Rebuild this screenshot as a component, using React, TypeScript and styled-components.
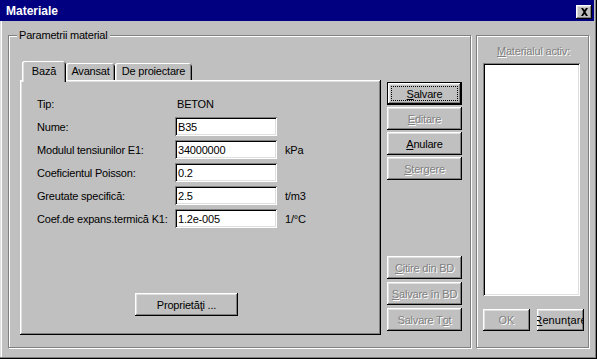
import React from "react";
import styled, { createGlobalStyle, css } from "styled-components";

const GlobalStyle = createGlobalStyle`
  html, body {
    margin: 0;
    padding: 0;
    background: #c0c0c0;
  }
  body {
    font-family: "Liberation Sans", Arial, sans-serif;
    font-size: 11px;
    letter-spacing: -0.2px;
    color: #000;
  }
`;

const raised = css`
  box-shadow: inset -1px -1px #000, inset 1px 1px #fff, inset -2px -2px #808080,
    inset 2px 2px #dfdfdf;
`;

const sunken = css`
  box-shadow: inset 1px 1px #808080, inset -1px -1px #fff, inset 2px 2px #000,
    inset -2px -2px #dfdfdf;
`;

const disabledText = css`
  color: #808080;
  text-shadow: 1px 1px #fff;
`;

const Window = styled.div`
  width: 597px;
  height: 359px;
  box-sizing: border-box;
  background: #c0c0c0;
  display: flex;
  flex-direction: column;
  padding: 0 3px 2px 0;
  box-shadow: inset -1px -1px #000, inset -2px -2px #808080, inset 1px 0 #dfdfdf,
    inset 2px 0 #fff;
`;

const TitleBar = styled.div`
  height: 21px;
  background: #000080;
  display: flex;
  align-items: flex-start;
  flex-shrink: 0;
`;

const Title = styled.div`
  color: #fff;
  font-weight: bold;
  font-size: 12px;
  letter-spacing: 0;
  line-height: 16px;
  padding: 3px 0 0 6px;
`;

const CloseButton = styled.div`
  margin: 5px 2px 0 auto;
  width: 16px;
  height: 14px;
  background: #c0c0c0;
  display: flex;
  align-items: center;
  justify-content: center;
  ${raised}
`;

const Body = styled.div`
  flex: 1;
  display: flex;
  gap: 5px;
  padding: 14px 1px 0 8px;
`;

const Group = styled.div<{ $w: number }>`
  position: relative;
  width: ${(p) => p.$w}px;
  height: 313px;
  box-sizing: border-box;
  border: 1px solid #808080;
  box-shadow: inset 1px 1px #fff, 1px 1px #fff;
  display: flex;
`;

const Legend = styled.div`
  position: absolute;
  top: -7px;
  left: 8px;
  padding: 0 2px;
  line-height: 13px;
  background: #c0c0c0;
  white-space: nowrap;
`;

const MainGroup = styled(Group)`
  padding: 25px 0 0 11px;
  gap: 6px;
  align-items: flex-start;
`;

const SideGroup = styled(Group)`
  padding: 9px 4px 0 6px;
  flex-direction: column;
  align-items: flex-start;
`;

const TabControl = styled.div`
  width: 361px;
  height: 274px;
  display: flex;
  flex-direction: column;
`;

const TabStrip = styled.div`
  height: 19px;
  display: flex;
  align-items: flex-end;
  padding-left: 2px;
  flex-shrink: 0;
`;

const Tab = styled.div<{ $w: number; $active?: boolean }>`
  position: relative;
  z-index: ${(p) => (p.$active ? 2 : 0)};
  width: ${(p) => p.$w}px;
  height: ${(p) => (p.$active ? 21 : 17)}px;
  margin-bottom: ${(p) => (p.$active ? -2 : 0)}px;
  box-sizing: border-box;
  padding-top: ${(p) => (p.$active ? 4 : 2)}px;
  line-height: 13px;
  text-align: center;
  white-space: nowrap;
  background: #c0c0c0;
  border-radius: 3px 3px 0 0;
  box-shadow: inset 1px 0 #fff, inset 0 1px #fff, inset -1px 0 #000,
    inset -2px 0 #808080, inset 2px 0 #dfdfdf;
`;

const TabPanel = styled.div`
  position: relative;
  z-index: 1;
  flex: 1;
  display: flex;
  flex-direction: column;
  padding: 14px 0 19px 17px;
  ${raised}
`;

const FieldGrid = styled.div`
  display: grid;
  grid-template-columns: 138px 102px auto;
  grid-auto-rows: 19px;
  row-gap: 4px;
  align-items: center;
`;

const Label = styled.span`
  white-space: nowrap;
`;

const Value = styled.span`
  padding-left: 2px;
`;

const Unit = styled.span`
  padding-left: 8px;
  white-space: nowrap;
`;

const Field = styled.input`
  width: 102px;
  height: 19px;
  box-sizing: border-box;
  border: none;
  outline: none;
  margin: 0;
  padding: 1px 3px 0;
  background: #fff;
  font: inherit;
  letter-spacing: inherit;
  color: #000;
  ${sunken}
`;

const Button = styled.button<{ $w?: number; $default?: boolean }>`
  position: relative;
  width: ${(p) => (p.$w ? `${p.$w}px` : "100%")};
  height: 23px;
  box-sizing: border-box;
  margin: 0;
  padding: 0;
  border: ${(p) => (p.$default ? "1px solid #000" : "none")};
  background: #c0c0c0;
  font: inherit;
  letter-spacing: inherit;
  color: #000;
  display: flex;
  align-items: center;
  justify-content: center;
  white-space: nowrap;
  overflow: hidden;
  flex-shrink: 0;
  ${raised}
  &:disabled {
    ${disabledText}
  }
  ${(p) =>
    p.$default &&
    css`
      &::after {
        content: "";
        position: absolute;
        inset: 3px;
        border: 1px dotted #000;
      }
    `}
`;

const PropsButton = styled(Button)`
  margin-top: auto;
  margin-left: 98px;
`;

const ButtonColumn = styled.div`
  width: 75px;
  height: 249px;
  margin-top: 21px;
  display: flex;
  flex-direction: column;
  justify-content: space-between;
`;

const ButtonStack = styled.div<{ $gap: number }>`
  display: flex;
  flex-direction: column;
  gap: ${(p) => p.$gap}px;
`;

const SideLabel = styled.div`
  align-self: stretch;
  text-align: center;
  line-height: 13px;
  ${disabledText}
`;

const ListBox = styled.div`
  width: 97px;
  height: 233px;
  margin-top: 5px;
  background: #fff;
  ${sunken}
`;

const DialogButtons = styled.div`
  margin-top: 13px;
  display: flex;
  gap: 7px;
`;

const DialogButton = styled(Button)`
  height: 22px;
  letter-spacing: 0.1px;
`;

const fields = [
  { label: "Nume:", value: "B35", unit: "" },
  { label: "Modulul tensiunilor E1:", value: "34000000", unit: "kPa" },
  { label: "Coeficientul Poisson:", value: "0.2", unit: "" },
  { label: "Greutate specifică:", value: "2.5", unit: "t/m3" },
  { label: "Coef.de expans.termică K1:", value: "1.2e-005", unit: "1/°C" },
];

const CloseIcon = () => (
  <svg width="9" height="8" viewBox="0 0 9 8">
    <path d="M1 0h2l1.5 2L6 0h2L5.5 4 8 8H6L4.5 6 3 8H1l2.5-4z" fill="#000" />
  </svg>
);

export default function App() {
  return (
    <>
      <GlobalStyle />
      <Window>
        <TitleBar>
          <Title>Materiale</Title>
          <CloseButton>
            <CloseIcon />
          </CloseButton>
        </TitleBar>
        <Body>
          <MainGroup $w={463}>
            <Legend>Parametrii material</Legend>
            <TabControl>
              <TabStrip>
                <Tab $w={44} $active>
                  Bază
                </Tab>
                <Tab $w={49}>Avansat</Tab>
                <Tab $w={77}>De proiectare</Tab>
              </TabStrip>
              <TabPanel>
                <FieldGrid>
                  <Label>Tip:</Label>
                  <Value>BETON</Value>
                  <span />
                  {fields.map((f) => (
                    <React.Fragment key={f.label}>
                      <Label>{f.label}</Label>
                      <Field defaultValue={f.value} />
                      <Unit>{f.unit}</Unit>
                    </React.Fragment>
                  ))}
                </FieldGrid>
                <PropsButton $w={103}>Proprietăţi ...</PropsButton>
              </TabPanel>
            </TabControl>
            <ButtonColumn>
              <ButtonStack $gap={2}>
                <Button $default>
                  <u>S</u>alvare
                </Button>
                <Button disabled>
                  <u>E</u>ditare
                </Button>
                <Button>
                  <u>A</u>nulare
                </Button>
                <Button disabled>
                  <u>S</u>tergere
                </Button>
              </ButtonStack>
              <ButtonStack $gap={3}>
                <Button disabled>
                  <u>C</u>itire din BD
                </Button>
                <Button disabled>
                  <u>S</u>alvare în BD
                </Button>
                <Button disabled>
                  Salvare T<u>o</u>t
                </Button>
              </ButtonStack>
            </ButtonColumn>
          </MainGroup>
          <SideGroup $w={113}>
            <SideLabel>
              <u>M</u>aterialul activ:
            </SideLabel>
            <ListBox />
            <DialogButtons>
              <DialogButton $w={47} disabled>
                OK
              </DialogButton>
              <DialogButton $w={47}>
                <u>R</u>enunţare
              </DialogButton>
            </DialogButtons>
          </SideGroup>
        </Body>
      </Window>
    </>
  );
}
